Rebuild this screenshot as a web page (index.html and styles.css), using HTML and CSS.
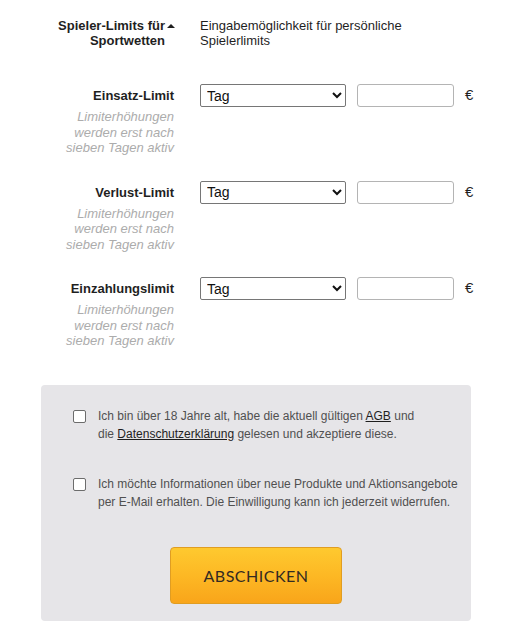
FILE: index.html
```html
<!DOCTYPE html>
<html lang="de">
<head>
<meta charset="utf-8">
<title>Spielerlimits</title>
<link rel="stylesheet" href="styles.css">
</head>
<body>
<div class="page">
  <div class="limits">
    <div class="head-label">Spieler-Limits für<br>Sportwetten<span class="caret"></span></div>
    <div class="head-desc">Eingabemöglichkeit für persönliche<br>Spielerlimits</div>

    <div class="label-cell">
      <div class="label">Einsatz-Limit</div>
      <div class="hint">Limiterhöhungen<br>werden erst nach<br>sieben Tagen aktiv</div>
    </div>
    <div class="controls">
      <select class="period"><option>Tag</option><option>Woche</option><option>Monat</option></select>
      <input class="amount" type="text">
      <span class="euro">€</span>
    </div>

    <div class="label-cell">
      <div class="label">Verlust-Limit</div>
      <div class="hint">Limiterhöhungen<br>werden erst nach<br>sieben Tagen aktiv</div>
    </div>
    <div class="controls">
      <select class="period"><option>Tag</option><option>Woche</option><option>Monat</option></select>
      <input class="amount" type="text">
      <span class="euro">€</span>
    </div>

    <div class="label-cell">
      <div class="label">Einzahlungslimit</div>
      <div class="hint">Limiterhöhungen<br>werden erst nach<br>sieben Tagen aktiv</div>
    </div>
    <div class="controls">
      <select class="period"><option>Tag</option><option>Woche</option><option>Monat</option></select>
      <input class="amount" type="text">
      <span class="euro">€</span>
    </div>
  </div>

  <div class="consent">
    <label class="check">
      <input type="checkbox" class="box">
      <span class="check-text">Ich bin über 18 Jahre alt, habe die aktuell gültigen <a href="#">AGB</a> und<br>die <a href="#">Datenschutzerklärung</a> gelesen und akzeptiere diese.</span>
    </label>
    <label class="check">
      <input type="checkbox" class="box">
      <span class="check-text">Ich möchte Informationen über neue Produkte und Aktionsangebote<br>per E-Mail erhalten. Die Einwilligung kann ich jederzeit widerrufen.</span>
    </label>
    <div class="actions">
      <button class="submit" type="button">ABSCHICKEN</button>
    </div>
  </div>
</div>
</body>
</html>
```

FILE: styles.css
```css
html, body {
  margin: 0;
  padding: 0;
  background: #ffffff;
}

body {
  font-family: "Liberation Sans", Arial, sans-serif;
  font-size: 13px;
  color: #1f1f1f;
}

.page {
  width: 510px;
  padding-top: 18px;
}

.limits {
  display: grid;
  grid-template-columns: 175px 1fr;
  column-gap: 25px;
  row-gap: 25px;
}

.head-label {
  position: relative;
  font-weight: bold;
  text-align: right;
  line-height: 15px;
  padding-right: 10px;
  margin-bottom: 11px;
}

.caret {
  position: absolute;
  right: 0;
  top: 6px;
  width: 0;
  height: 0;
  border-left: 4px solid transparent;
  border-right: 4px solid transparent;
  border-bottom: 4px solid #1f1f1f;
}

.head-desc {
  line-height: 15px;
}

.label-cell {
  text-align: right;
  padding-right: 1px;
}

.label {
  font-weight: bold;
  line-height: 23px;
}

.hint {
  margin-top: 2px;
  font-style: italic;
  color: #acacac;
  line-height: 15.5px;
}

.controls {
  display: flex;
  align-items: center;
  height: 23px;
}

.period {
  width: 146px;
  height: 23px;
  box-sizing: border-box;
  border: 1px solid #767676;
  border-radius: 2px;
  background: #ffffff;
  font-family: "Liberation Sans", Arial, sans-serif;
  font-size: 14px;
  color: #111;
  padding: 0 0 0 2px;
  margin: 0;
}

.amount {
  width: 97px;
  height: 23px;
  box-sizing: border-box;
  border: 1px solid #b4b4b4;
  border-radius: 3px;
  margin: 0 0 0 11px;
  padding: 0 4px;
  font-family: "Liberation Sans", Arial, sans-serif;
  font-size: 13px;
}

.euro {
  margin-left: 11px;
  font-size: 15px;
  color: #1f1f1f;
  position: relative;
  top: -1px;
}

.consent {
  margin: 36px 0 0 41px;
  width: 430px;
  box-sizing: border-box;
  background: #e6e5e8;
  border-radius: 4px;
  padding: 22px 8px 17px 32px;
}

.check {
  display: flex;
  align-items: flex-start;
  column-gap: 12px;
  font-size: 12px;
  line-height: 18px;
  color: #505050;
}

.check + .check {
  margin-top: 32px;
}

.box {
  appearance: none;
  -webkit-appearance: none;
  width: 13px;
  height: 13px;
  box-sizing: border-box;
  margin: 3px 0 0 0;
  border: 1px solid #6c6c6c;
  border-radius: 2px;
  background: #ffffff;
  flex: none;
}

.check-text a {
  color: #1f1f1f;
  text-decoration: underline;
}

.actions {
  display: flex;
  justify-content: center;
  margin-top: 36px;
  padding-right: 24px;
}

.submit {
  width: 172px;
  height: 57px;
  border: 1px solid #e09d22;
  border-radius: 4px;
  background: linear-gradient(to bottom, #fec92f 0%, #fdb824 50%, #f9a51a 100%);
  font-family: Lato, "Open Sans", sans-serif;
  font-size: 16px;
  font-weight: 400;
  letter-spacing: 0.5px;
  color: #332a22;
  padding: 0;
  cursor: pointer;
}
```
